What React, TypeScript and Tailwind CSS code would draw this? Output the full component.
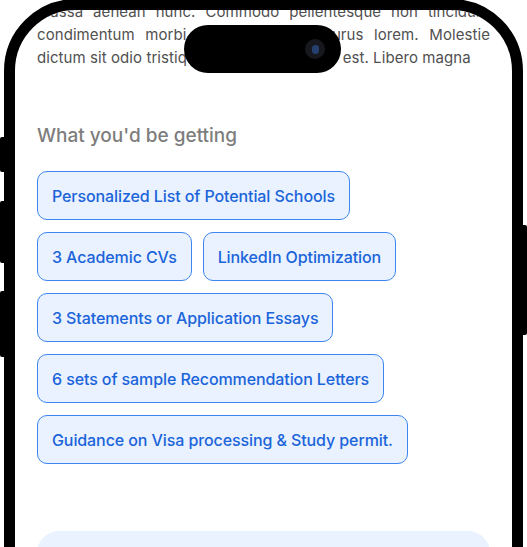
import React from "react";

const chipsRows: string[][] = [
  ["Personalized List of Potential Schools"],
  ["3 Academic CVs", "LinkedIn Optimization"],
  ["3 Statements or Application Essays"],
  ["6 sets of sample Recommendation Letters"],
  ["Guidance on Visa processing & Study permit."],
];

function Chip({ label }: { label: string }) {
  return (
    <div className="h-[49px] flex items-center px-[14px] rounded-[10px] border border-[#3d86ef] bg-[#e9f2fe] text-[#1b64da] text-[16px] font-medium tracking-[-0.006em] whitespace-nowrap">
      {label}
    </div>
  );
}

export default function App() {
  return (
    <div
      className="relative w-[527px] h-[547px] overflow-hidden bg-white"
      style={{ fontFamily: "Inter, 'Noto Sans', sans-serif" }}
    >
      {/* side buttons */}
      <div className="absolute left-0 top-[137px] w-[6px] h-[35px] bg-black rounded-l-[2px]" />
      <div className="absolute left-0 top-[201px] w-[6px] h-[62px] bg-black rounded-l-[2px]" />
      <div className="absolute left-0 top-[291px] w-[6px] h-[66px] bg-black rounded-l-[2px]" />
      <div className="absolute right-0 top-[225px] w-[6px] h-[110px] bg-black rounded-r-[2px]" />

      {/* phone frame */}
      <div className="relative ml-[4px] mt-[-1px] w-[519px] h-[700px] border-[11px] border-black rounded-[72px] overflow-hidden bg-white">
        <div className="flex flex-col px-[22px]">
          <div className="mt-[-10px] text-[15px] leading-[23px] tracking-[0.005em] text-[#505050]">
            <div className="[text-align-last:justify] whitespace-nowrap">
              massa aenean nunc. Commodo pellentesque non tincidunt
            </div>
            <div className="[text-align-last:justify] whitespace-nowrap">
              condimentum morbi vulputate tellus purus lorem. Molestie
            </div>
            <div className="whitespace-nowrap">
              dictum sit odio tristique habitant morbi leo est. Libero magna
            </div>
          </div>

          <h2 className="mt-[55px] text-[19px] leading-[24px] font-medium text-[#7d7d7d]">
            What you'd be getting
          </h2>

          <div className="mt-[23px] flex flex-col gap-[12px]">
            {chipsRows.map((row, i) => (
              <div key={i} className="flex gap-[11px]">
                {row.map((c) => (
                  <Chip key={c} label={c} />
                ))}
              </div>
            ))}
          </div>

          <div className="mt-[67px] h-[120px] rounded-[22px] bg-[#e9f2fe]" />
        </div>

        {/* dynamic island */}
        <div className="absolute left-[169px] top-[15px] w-[157px] h-[48px] rounded-full bg-black flex items-center justify-end pr-[16px]">
          <div className="w-[20px] h-[20px] rounded-full bg-[#16181d] flex items-center justify-center">
            <div className="w-[7px] h-[9px] rounded-full bg-[#25406e]" />
          </div>
        </div>
      </div>
    </div>
  );
}
